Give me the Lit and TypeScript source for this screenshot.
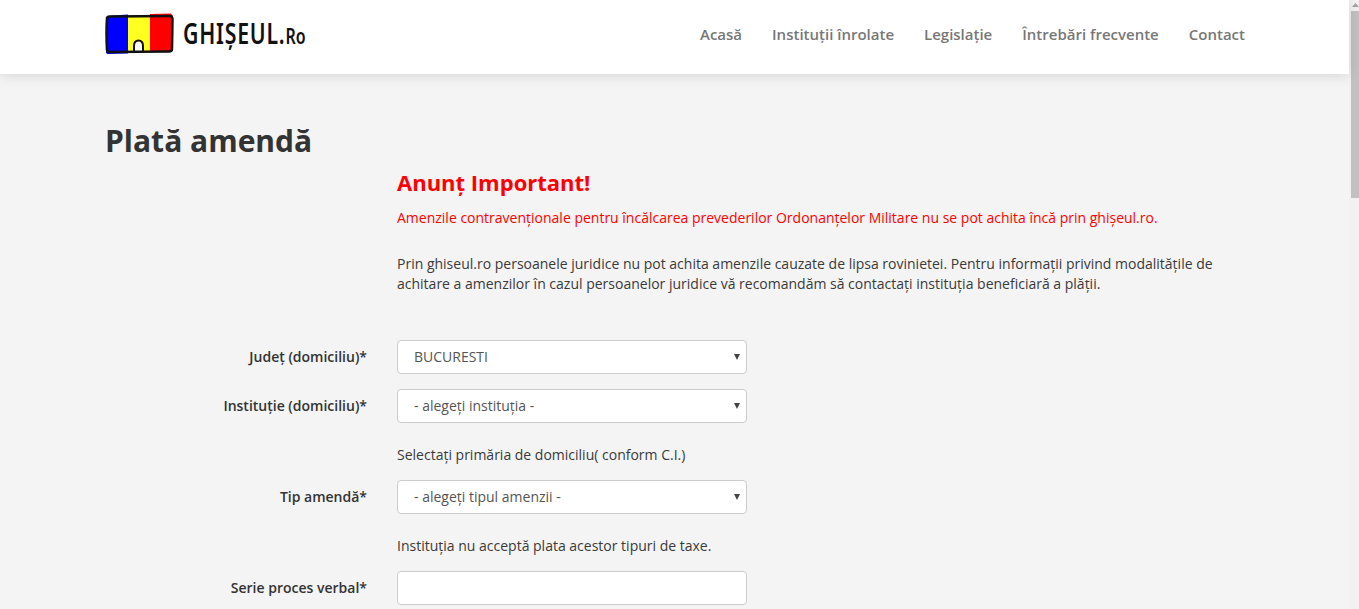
import { LitElement, html, css } from "lit";
import { customElement } from "lit/decorators.js";

@customElement("app-root")
export class AppRoot extends LitElement {
  static styles = css`
    :host { display: flex; width: 1359px; height: 609px; overflow: hidden; background: #f4f4f4; color: #333; font-family: "Open Sans", sans-serif; font-size: 14px; line-height: 20px; }
    .page { flex: 1; min-width: 0; display: flex; flex-direction: column; }
    .sb { width: 10px; background: #f1f1f1; display: flex; flex-direction: column; align-items: stretch; }
    .sb .arrow { height: 11px; display: flex; justify-content: center; padding: 3px 0 0 2px; box-sizing: border-box; }
    .sb .thumb { height: 187px; margin-left: 2px; background: #c1c1c1; }
    header { height: 74px; box-sizing: border-box; padding: 0 104px 6px 105px; background: #fff; box-shadow: 0 2px 12px rgba(0,0,0,.12); display: flex; align-items: center; justify-content: space-between; position: relative; z-index: 1; }
    .logo { display: flex; align-items: center; gap: 9px; }
    .logo-text { font-family: "Noto Sans", sans-serif; font-weight: 600; font-size: 28px; line-height: 30px; letter-spacing: 1px; color: #111; display: inline-block; white-space: nowrap; transform: scaleX(0.76); transform-origin: left center; width: 121px; }
    .logo-text small { font-size: 21px; letter-spacing: 0; }
    nav { display: flex; gap: 30px; }
    nav a { font-size: 15px; font-weight: 600; color: #777; white-space: nowrap; }
    main { padding: 0 0 0 105px; }
    h1 { margin: 50px 0 0; font-size: 30px; line-height: 34px; font-weight: 700; color: #333; }
    .content { margin-left: 292px; width: 840px; color: #3a3a3a; }
    h2 { margin: 8px 0 0; font-size: 22px; line-height: 32px; font-weight: 700; color: #f00; }
    .red { margin: 10px 0 0; color: #f00; }
    .note { margin: 26px 0 0; }
    form { margin-top: 46px; display: grid; grid-template-columns: 262px 350px; column-gap: 30px; row-gap: 15px; align-items: center; }
    label { font-weight: 600; text-align: right; white-space: nowrap; }
    .field { height: 34px; box-sizing: border-box; background: #fff; border: 1px solid #ccc; border-radius: 4px; padding: 0 16px; display: flex; align-items: center; justify-content: space-between; color: #555; }
    .caret { width: 0; height: 0; border-left: 3px solid transparent; border-right: 3px solid transparent; border-top: 6px solid #444; margin-right: -10px; }
    .help { grid-column: 2; margin: 7px 0 0; color: #3a3a3a; }
  `;

  private sel(v: string) {
    return html`<div class="field"><span>${v}</span><i class="caret"></i></div>`;
  }

  render() {
    return html`
      <div class="page">
        <header>
          <div class="logo">
            <svg width="69" height="42" viewBox="0 0 69 42">
              <path d="M2 3 L23 1.500 L23 40.500 L3 41 Q0.500 41 1 38 Z" fill="#0000ff"/>
              <path d="M23 3 L45 3 L45 38 L23 38 Z" fill="#ffff22"/>
              <path d="M45 3 L45 1 L66 0.500 L68 3 L67 39 L45 39 Z" fill="#ff0000"/>
              <path d="M29 39 V33 Q29 27.500 33.500 27.500 Q38 27.500 38 33 V39 Z" fill="#fff" stroke="#111" stroke-width="2"/>
              <path d="M2 5 Q1 20 2 37 Q2.500 39.500 5 39 L64 38.500 Q67 38.500 67 36 L67.500 6 Q67.500 3 64 3 L5 3.500 Q2.500 3.500 2 5 Z" fill="none" stroke="#111" stroke-width="2.500"/>
            </svg>
            <span class="logo-text">GHIȘEUL.<small>Ro</small></span>
          </div>
          <nav>
            <a>Acasă</a><a>Instituții înrolate</a><a>Legislație</a><a>Întrebări frecvente</a><a>Contact</a>
          </nav>
        </header>
        <main>
          <h1>Plată amendă</h1>
          <div class="content">
            <h2>Anunț Important!</h2>
            <p class="red">Amenzile contravenționale pentru încălcarea prevederilor Ordonanțelor Militare nu se pot achita încă prin ghișeul.ro.</p>
            <p class="note">Prin ghiseul.ro persoanele juridice nu pot achita amenzile cauzate de lipsa rovinietei. Pentru informații privind modalitățile de achitare a amenzilor în cazul persoanelor juridice vă recomandăm să contactați instituția beneficiară a plății.</p>
          </div>
          <form>
            <label>Județ (domiciliu)*</label>${this.sel("BUCURESTI")}
            <label>Instituție (domiciliu)*</label>${this.sel("- alegeți instituția -")}
            <div class="help">Selectați primăria de domiciliu( conform C.I.)</div>
            <label>Tip amendă*</label>${this.sel("- alegeți tipul amenzii -")}
            <div class="help">Instituția nu acceptă plata acestor tipuri de taxe.</div>
            <label>Serie proces verbal*</label><div class="field"></div>
          </form>
        </main>
      </div>
      <div class="sb">
        <div class="arrow"><svg width="7" height="4" viewBox="0 0 7 4"><path d="M3.500 0 L7 4 H0 Z" fill="#a3a3a3"/></svg></div>
        <div class="thumb"></div>
      </div>
    `;
  }
}
